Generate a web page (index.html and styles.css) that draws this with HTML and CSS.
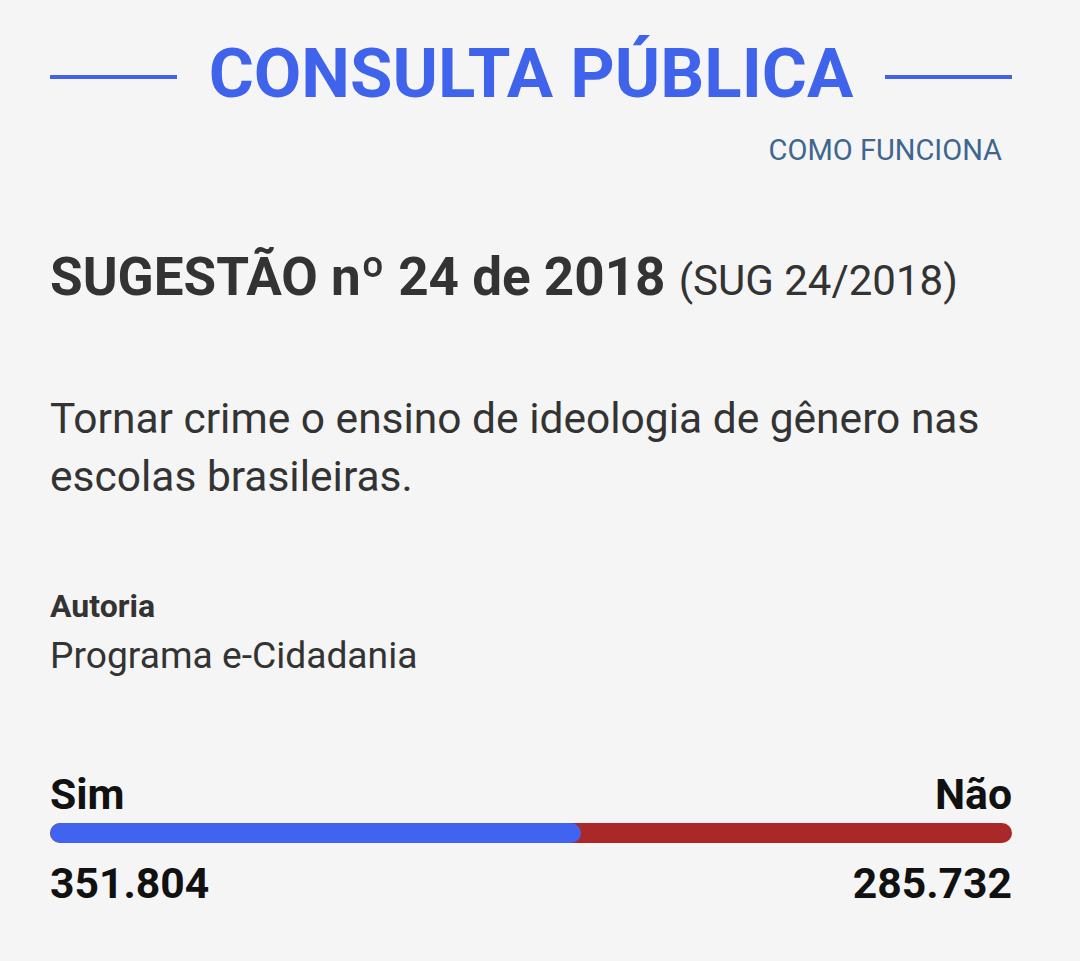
FILE: index.html
```html
<!DOCTYPE html>
<html lang="pt-BR">
<head>
<meta charset="utf-8">
<link rel="stylesheet" href="styles.css">
</head>
<body>
<div class="page">
  <header class="header">
    <span class="rule"></span>
    <h1 class="title">CONSULTA PÚBLICA</h1>
    <span class="rule"></span>
  </header>
  <div class="how"><a class="how-link">COMO FUNCIONA</a></div>

  <h2 class="sug">SUGESTÃO nº 24 de 2018 <span class="sug-code">(SUG 24/2018)</span></h2>

  <p class="desc">Tornar crime o ensino de ideologia de gênero nas escolas brasileiras.</p>

  <div class="author">
    <div class="author-label">Autoria</div>
    <div class="author-name">Programa e-Cidadania</div>
  </div>

  <div class="votes">
    <div class="vote-row labels"><span>Sim</span><span>Não</span></div>
    <div class="bar"><div class="bar-yes" style="width:55.18%"></div></div>
    <div class="vote-row counts"><span>351.804</span><span>285.732</span></div>
  </div>
</div>
</body>
</html>
```

FILE: styles.css
```css
html, body {
  margin: 0;
  padding: 0;
  background: #f5f5f5;
}
body {
  font-family: Roboto, "Liberation Sans", sans-serif;
  color: #333;
}
.page {
  padding: 30px 68px 0 50px;
  width: 962px;
}
.header {
  display: flex;
  align-items: center;
  justify-content: space-between;
  height: 88px;
}
.rule {
  display: block;
  width: 127px;
  height: 4px;
  margin-top: 6px;
  background: #4063eb;
}
.title {
  margin: 0;
  font-size: 69px;
  font-weight: 700;
  color: #4063eb;
  line-height: 88px;
}
.how {
  display: flex;
  justify-content: flex-end;
  padding-right: 10px;
  margin-top: 12px;
}
.how-link {
  font-size: 29px;
  color: #3e6690;
  line-height: 40px;
}
.sug {
  margin: 72px 0 0 0;
  font-size: 53px;
  line-height: 70px;
  font-weight: 700;
  color: #333;
}
.sug-code {
  font-size: 42px;
  font-weight: 400;
  line-height: 40px;
}
.desc {
  margin: 78px 0 0 0;
  font-size: 42.5px;
  line-height: 58px;
  color: #333;
}
.author {
  margin-top: 82px;
}
.author-label {
  font-size: 32px;
  font-weight: 700;
  line-height: 36px;
}
.author-name {
  margin-top: 6px;
  font-size: 37.2px;
  line-height: 50px;
}
.votes {
  margin-top: 89px;
}
.vote-row {
  display: flex;
  justify-content: space-between;
  font-weight: 700;
  font-size: 42.7px;
  line-height: 50px;
  color: #111;
}
.counts {
  margin-top: 15px;
}
.bar {
  margin-top: 4px;
  height: 20px;
  border-radius: 10px;
  background: #aa2828;
  overflow: hidden;
}
.bar-yes {
  height: 100%;
  background: #4063f0;
  border-radius: 10px;
}
```
